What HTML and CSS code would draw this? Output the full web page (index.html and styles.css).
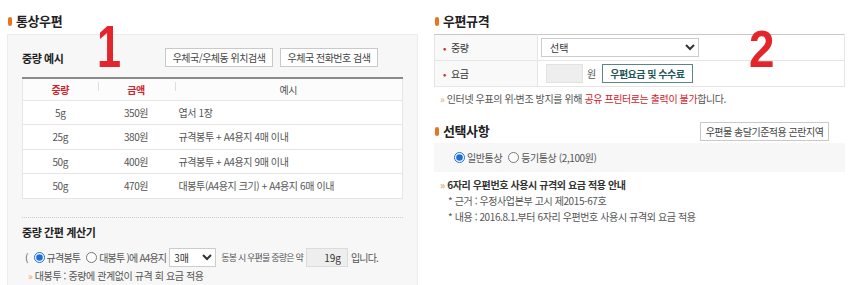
FILE: index.html
```html
<!DOCTYPE html>
<html lang="ko">
<head>
  <meta charset="UTF-8">
  <title>우편 요금</title>
  <link rel="stylesheet" href="styles.css">
</head>
<body>
  <div class="page">
    <section class="col">
      <h2 class="sec-title">통상우편</h2>
      <div class="box">
        <div class="box-head">
          <h3>중량 예시</h3>
          <div class="btns">
            <button class="btn btn-loc">우체국/우체동 위치검색</button>
            <button class="btn btn-tel">우체국 전화번호 검색</button>
          </div>
        </div>

        <table class="weight-table">
          <colgroup>
            <col class="c1">
            <col class="c2">
            <col>
          </colgroup>
          <thead>
            <tr>
              <th class="red">중량</th>
              <th class="red sep">금액</th>
              <th class="sep">예시</th>
            </tr>
          </thead>
          <tbody>
            <tr><td>5g</td><td>350원</td><td class="ex">엽서 1장</td></tr>
            <tr><td>25g</td><td>380원</td><td class="ex">규격봉투 + A4용지 4매 이내</td></tr>
            <tr><td>50g</td><td>400원</td><td class="ex">규격봉투 + A4용지 9매 이내</td></tr>
            <tr><td>50g</td><td>470원</td><td class="ex">대봉투(A4용지 크기) + A4용지 6매 이내</td></tr>
          </tbody>
        </table>

        <hr class="dotted">

        <h3>중량 간편 계산기</h3>
        <div class="calc">
          <span class="paren">(</span>
          <label class="radio"><input type="radio" name="env" checked>규격봉투</label>
          <label class="radio"><input type="radio" name="env">대봉투 )에 A4용지</label>
          <select class="sel-sheet">
            <option>3매</option>
          </select>
          <span class="small">동봉 시 우편물 중량은 약</span>
          <input class="weight-out" type="text" value="19g" readonly>
          <span>입니다.</span>
        </div>
        <p class="note"><span class="arr">»</span> 대봉투 : 중량에 관계없이 규격 회 요금 적용</p>
      </div>
    </section>

    <section class="col">
      <h2 class="sec-title">우편규격</h2>
      <table class="spec">
        <tr>
          <th>중량</th>
          <td>
            <select class="sel-weight">
              <option>선택</option>
            </select>
          </td>
        </tr>
        <tr>
          <th>요금</th>
          <td>
            <div class="fee">
              <input class="fee-out" type="text" readonly>
              <span>원</span>
              <button class="btn btn-fee">우편요금 및 수수료</button>
            </div>
          </td>
        </tr>
      </table>
      <p class="note"><span class="arr">»</span> 인터넷 우표의 위·변조 방지를 위해 <span class="red">공유 프린터로는 출력이 불가</span>합니다.</p>

      <div class="title-row">
        <h2 class="sec-title">선택사항</h2>
        <button class="btn btn-area">우편물 송달기준적용 곤란지역</button>
      </div>
      <div class="option-box">
        <label class="radio"><input type="radio" name="kind" checked>일반통상</label>
        <label class="radio"><input type="radio" name="kind">등기통상 (2,100원)</label>
      </div>
      <div class="guide">
        <p class="guide-title"><span class="arr">»</span> 6자리 우편번호 사용시 규격외 요금 적용 안내</p>
        <p class="guide-item">* 근거 : 우정사업본부 고시 제2015-67호</p>
        <p class="guide-item">* 내용 : 2016.8.1.부터 6자리 우편번호 사용시 규격외 요금 적용</p>
      </div>
    </section>

    <span class="mark mark-1">1</span>
    <span class="mark mark-2">2</span>
  </div>
</body>
</html>
```

FILE: styles.css
```css
* {
  box-sizing: border-box;
  margin: 0;
  padding: 0;
}

body {
  font-family: "Noto Sans CJK KR", "Noto Sans", sans-serif;
  font-size: 10px;
  letter-spacing: -0.4px;
  color: #555;
  background: #fff;
  overflow: hidden;
}

.page {
  position: relative;
  display: flex;
  gap: 16px;
  padding: 10px 7px 0;
  height: 285px;
  overflow: hidden;
}

.col {
  width: 411px;
}

.sec-title {
  display: flex;
  align-items: center;
  gap: 4px;
  font-size: 13px;
  line-height: 22px;
  font-weight: 700;
  color: #222;
  margin-bottom: 2px;
}

.sec-title::before {
  content: "";
  width: 4px;
  height: 9px;
  margin-left: 1px;
  border-radius: 2px;
  background: #e8741c;
}

.red {
  color: #d0232a;
}

.arr {
  color: #e9a472;
}

/* left box */
.box {
  background: #f7f7f7;
  border: 1px solid #ececec;
  padding: 13px 14px 0;
  height: 262px;
}

.box h3 {
  font-size: 11px;
  font-weight: 700;
  color: #222;
  line-height: 16px;
}

.box-head {
  display: flex;
  justify-content: space-between;
  align-items: center;
  padding-right: 25px;
}

.btns {
  display: flex;
  gap: 7px;
}

.btn {
  height: 19px;
  border: 1px solid #c9c9c9;
  background: #fff;
  font-family: inherit;
  font-size: 10px;
  letter-spacing: -0.5px;
  color: #444;
  cursor: pointer;
  white-space: nowrap;
}

.btn-loc { width: 108px; }
.btn-tel { width: 98px; }

.weight-table {
  width: 100%;
  margin-top: 10px;
  border-collapse: collapse;
  background: #fff;
  border: 1px solid #e6e6e6;
  border-top: 2px solid #8a8a8a;
  text-align: center;
}

.weight-table .c1 { width: 75px; }
.weight-table .c2 { width: 77px; }

.weight-table th {
  height: 22px;
  font-weight: 400;
  background: #fcfcfc;
}

.weight-table th.red {
  font-weight: 700;
}

.weight-table th.sep {
  background: #fcfcfc linear-gradient(#ddd, #ddd) no-repeat 0 3px / 1px 9px;
}

.weight-table td {
  height: 24.5px;
  border-top: 1px solid #e6e6e6;
  color: #555;
}

.weight-table td.ex {
  text-align: left;
  padding-left: 4px;
}

.dotted {
  border: 0;
  border-top: 1px dotted #ccc;
  margin-top: 18px;
}

.box .dotted + h3 {
  margin-top: 6px;
}

.calc {
  display: flex;
  align-items: center;
  height: 19px;
  margin-top: 8px;
  padding-left: 3px;
  gap: 3px;
  white-space: nowrap;
  letter-spacing: -0.8px;
}

.calc > * {
  flex-shrink: 0;
}

.calc .radio {
  margin-right: 0;
}

.calc .small {
  font-size: 9px;
  margin-left: 2px;
}

.radio {
  display: inline-flex;
  align-items: center;
  color: #555;
  margin-right: 3px;
  white-space: nowrap;
}

.radio input {
  width: 11px;
  height: 11px;
  margin: 0 2px 0 3px;
  accent-color: #1a6fd8;
}

.sel-sheet {
  width: 47px;
  height: 19px;
  border: 1px solid #ccc;
  background: #fff;
  font-family: inherit;
  font-size: 10px;
  color: #333;
}

.weight-out {
  width: 42px;
  height: 19px;
  border: 1px solid #dcdcdc;
  background: #eee;
  text-align: right;
  padding-right: 6px;
  font-family: inherit;
  font-size: 10px;
  color: #333;
}

.note {
  line-height: 16px;
  padding-left: 6px;
  color: #555;
  white-space: nowrap;
}

.calc + .note {
  margin-top: 1px;
}

/* right side */
.spec {
  width: 100%;
  border-collapse: collapse;
  border: 1px solid #e5e5e5;
  border-top: 1px solid #c8c8c8;
}

.spec th,
.spec td {
  height: 26px;
  border-bottom: 1px solid #e5e5e5;
}

.spec th {
  width: 103px;
  background: #f9f9f9;
  border-right: 1px solid #e5e5e5;
  text-align: left;
  padding-left: 8px;
  font-weight: 400;
  color: #333;
}

.spec th::before {
  content: "•";
  color: #d0232a;
  margin-right: 5px;
}

.spec td {
  padding-left: 3px;
}

.sel-weight {
  width: 158px;
  height: 19px;
  border: 1px solid #ccc;
  background: #fff;
  font-family: inherit;
  font-size: 10px;
  color: #333;
  padding-left: 4px;
}

.fee {
  display: flex;
  align-items: center;
  gap: 4px;
  padding-left: 5px;
}

.fee-out {
  width: 37px;
  height: 19px;
  border: 1px solid #e2e2e2;
  background: #eee;
}

.btn-fee {
  width: 91px;
  margin-left: 2px;
  border-color: #5d8585;
  color: #1f5757;
  font-weight: 700;
}

.col > .note {
  margin-top: 4px;
}

.title-row {
  display: flex;
  justify-content: space-between;
  align-items: center;
  margin-top: 13px;
  padding-right: 16px;
}

.title-row .sec-title {
  margin-bottom: 0;
}

.btn-area {
  width: 129px;
}

.option-box {
  display: flex;
  align-items: center;
  height: 29px;
  margin-top: 1px;
  padding-left: 17px;
  background: #f7f7f7;
}

.guide {
  margin-top: 5px;
  line-height: 16px;
}

.guide-title {
  padding-left: 6px;
  font-weight: 700;
  color: #333;
}

.guide-item {
  padding-left: 14px;
  color: #555;
}

/* annotation numbers */
.mark {
  position: absolute;
  font-family: "Liberation Sans", Arial, sans-serif;
  font-weight: 700;
  line-height: 1;
  color: #e3262b;
  letter-spacing: 0;
  transform-origin: 0 0;
}

.mark-1 {
  left: 97px;
  top: 17px;
  font-size: 60px;
  transform: scaleX(0.72);
}

.mark-2 {
  left: 749px;
  top: 23px;
  font-size: 52px;
  transform: scaleX(0.88);
}
```
